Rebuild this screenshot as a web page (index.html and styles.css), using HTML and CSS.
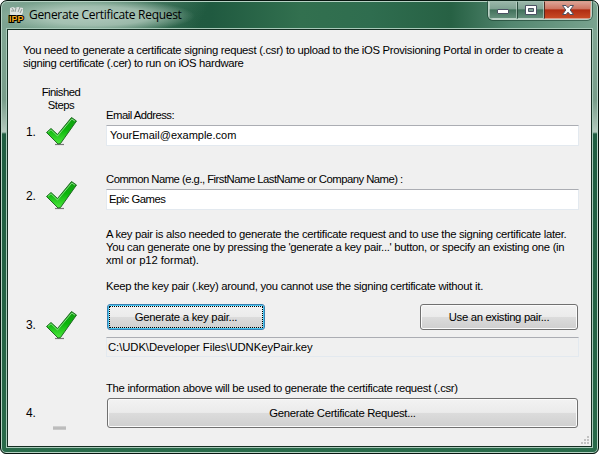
FILE: index.html
```html
<!DOCTYPE html>
<html lang="en">
<head>
<meta charset="utf-8">
<title>Generate Certificate Request</title>
<link rel="stylesheet" href="styles.css">
</head>
<body>
<svg width="0" height="0" class="defs">
  <defs>
    <linearGradient id="green" x1="0" y1="0" x2="0" y2="1">
      <stop offset="0" stop-color="#149c14"/><stop offset=".45" stop-color="#0bb50b"/><stop offset="1" stop-color="#4be83c"/>
    </linearGradient>
    <symbol id="check" viewBox="0 0 34 30">
      <path d="M10 28.5h9" stroke="#777" stroke-width="1.200"/>
      <path d="M1.500 16.500 L6 12.500 L12.500 18.500 L26.500 1.500 L31.500 5 L15.500 27.500 L13 28 Z" fill="url(#green)" stroke="#236b25" stroke-width="1" stroke-linejoin="round"/>
      <path d="M3 16.300 L6 13.800 L12.500 20 L26.800 3 L30 5.200" fill="none" stroke="#8fe08c" stroke-width=".9"/>
    </symbol>
  </defs>
</svg>
<div class="window">
  <header class="titlebar">
    <svg class="app-icon" width="17" height="17" viewBox="0 0 17 17">
      <path d="M2 1l3-1 2 1 3-1 5 1v4l-2 5H3L2 7z" fill="#dce2df"/>
      <path d="M4 1l2 3M8 1l-1 4M12 0l-2 5M14 2l-2 4M3 4h3" stroke="#8d9893" fill="none"/>
      <text class="icon-text" x="1" y="14.500" textLength="14.500">IPP</text>
    </svg>
    <h1 class="title">Generate Certificate Request</h1>
    <div class="controls">
      <span class="control minimize"><svg width="14" height="12" viewBox="0 0 14 12"><rect x="1.500" y="5.500" width="11" height="4" rx=".5" fill="#fff" stroke="#4b5263"/></svg></span>
      <span class="control maximize"><svg width="14" height="12" viewBox="0 0 14 12"><path d="M1.500 1.500h11v9h-11z" fill="#fff" stroke="#4b5263"/><path d="M4.500 4.500h5v3h-5z" fill="#7fa292" stroke="#4b5263"/></svg></span>
      <span class="control close"><svg width="14" height="12" viewBox="0 0 14 12"><path d="M1.500 1.500h3.500l2 2.300 2-2.300h3.500l-3.300 4.500 3.300 4.500h-3.500l-2-2.300-2 2.300h-3.500l3.300-4.500z" fill="#fff" stroke="#4b5263"/></svg></span>
    </div>
  </header>
  <main class="client">
    <p class="intro"><span class="line t30">You need to generate a certificate signing request (.csr) to upload to the iOS Provisioning Portal in order to create a</span><span class="line t33">signing certificate (.cer) to run on iOS hardware</span></p>
    <p class="steps-heading t53">Finished<br>Steps</p>
    <section class="step email">
      <span class="number">1.</span><svg class="check"><use href="#check"/></svg>
      <div class="body"><label class="label t53">Email Address:</label><div class="field address">YourEmail@example.com</div></div>
    </section>
    <section class="step name">
      <span class="number">2.</span><svg class="check"><use href="#check"/></svg>
      <div class="body"><label class="label t53">Common Name (e.g., FirstName LastName or Company Name) :</label><div class="field t53">Epic Games</div></div>
    </section>
    <div class="notes">
      <p><span class="line t29">A key pair is also needed to generate the certificate request and to use the signing certificate later.</span><span class="line t29">You can generate one by pressing the 'generate a key pair...' button, or specify an existing one (in</span><span class="line t10">xml or p12 format).</span></p>
      <p class="line t29">Keep the key pair (.key) around, you cannot use the signing certificate without it.</p>
    </div>
    <section class="step keys">
      <span class="number">3.</span><svg class="check"><use href="#check"/></svg>
      <div class="body">
        <div class="pair"><button class="button focused t25">Generate a key pair...</button><button class="button t33">Use an existing pair...</button></div>
        <div class="field readonly">C:\UDK\Developer Files\UDNKeyPair.key</div>
      </div>
    </section>
    <section class="step request">
      <span class="number">4.</span><span class="pending"></span>
      <div class="body"><label class="label t30">The information above will be used to generate the certificate request (.csr)</label><button class="button large t30">Generate Certificate Request...</button></div>
    </section>
    <svg class="grip" width="8" height="8" viewBox="0 0 8 8"><path d="M6 0h2v2h-2zM3 3h2v2h-2zM6 3h2v2h-2zM0 6h2v2h-2zM3 6h2v2h-2zM6 6h2v2h-2z" fill="#c2c2c2"/></svg>
  </main>
</div>
</body>
</html>
```
FILE: styles.css
```css
* { box-sizing: border-box; }
body { margin: 0; width: 599px; height: 454px; overflow: hidden; background: #fff; font: 11.3px/13px "Liberation Sans", Arial, sans-serif; color: #000; }
p, h1 { margin: 0; }
.defs { position: absolute; }
.window {
  width: 599px; height: 454px; padding: 0 6px 6px; display: flex; flex-direction: column;
  border: 1px solid #07150f; border-radius: 7px 7px 6px 6px;
  box-shadow: inset 0 0 0 1px #b6d2c4;
  background:
    radial-gradient(ellipse 98px 17px at 96px 15px, rgba(190, 211, 200, .85) 0, rgba(180, 204, 191, .75) 55%, rgba(170, 195, 182, 0) 100%) 0 0 / 100% 29px no-repeat,
    linear-gradient(115deg, #7fa493 0, #74a08a 65px, transparent 190px) 0 0 / 100% 29px no-repeat,
    linear-gradient(90deg, #276046 0, #205a40 210px, #32704f 300px, #2f6d4f 370px, #276144 450px, #538770 510px, #7aa490 598px) 0 0 / 100% 29px no-repeat,
    linear-gradient(180deg, #80a693 0, #789d8a 70px, #b4c9be 102px, #1f5d41 104px, #256345 300px, #2a6c4b 100%) 0 29px / 100% 100% no-repeat;
}
.titlebar { height: 28px; display: flex; align-items: flex-start; flex: none; }
.app-icon { margin: 6px 0 0 1px; flex: none; }
.icon-text { font: bold 9px "Liberation Sans", sans-serif; fill: #f7ac1b; stroke: #000; stroke-width: 2px; paint-order: stroke; }
.title {
  margin: 5px 0 0 -2px; padding: 0 6px; font: 12px/18px "Open Sans", sans-serif; letter-spacing: -.3px; color: #000; white-space: nowrap;
}
.controls { display: flex; margin-left: auto; height: 19px; border: 1px solid #bdd2c7; border-top: 0; border-radius: 0 0 5px 5px; overflow: hidden; box-shadow: 0 0 0 1px rgba(20, 55, 40, .55); }
.control { display: flex; justify-content: center; align-items: center; height: 18px; border: 1px solid rgba(215, 231, 223, .55); border-radius: 1px; background: linear-gradient(#98b5a8 0, #7fa292 45%, #41705a 48%, #648f7b 100%); }
.minimize { width: 28px; }
.maximize { width: 27px; border-left-color: #294c3d; }
.close { width: 47px; border-color: #d99c8b; border-left-color: #52291f; background: linear-gradient(#dba294 0, #cd735f 45%, #af2c12 48%, #c84a25 100%); }
.client { flex: 1; position: relative; background: #f0f0f0; border: 1px solid #142e22; box-shadow: 0 0 0 1px #a8c9b9; padding: 14px 11px 0 15px; }
.line { display: block; white-space: nowrap; }
.t10 { letter-spacing: -.1px; }
.t25 { letter-spacing: -.25px; }
.t29 { letter-spacing: -.285px; }
.t30 { letter-spacing: -.3px; }
.t33 { letter-spacing: -.33px; }
.t53 { letter-spacing: -.52px; }
.steps-heading { width: 76px; margin-top: 16px; text-align: center; }
.step { display: flex; padding-left: 3px; }
.number { width: 19px; flex: none; letter-spacing: -.2px; font-size: 12px; }
.check { width: 34px; height: 30px; flex: none; }
.body { margin-left: 27px; width: 473px; flex: none; }
.label { display: block; white-space: nowrap; }
.field { height: 20px; padding: 3px 2px 0; border: 1px solid #e3e9ef; border-top-color: #abadb3; background: #fff; white-space: nowrap; }
.email { margin-top: -3px; }
.email .number, .name .number { margin-top: 17px; }
.email .check, .name .check { margin-top: 7px; }
.label + .field { margin-top: 3px; height: 21px; }
.address { font-size: 11px; padding-left: 3px; letter-spacing: 0; }
.name { margin-top: 27px; }
.notes { margin: 18px 0 0 83px; }
.notes p + p { margin-top: 13px; }
.keys { margin-top: 11px; }
.keys .number { margin-top: 15px; }
.keys .check { margin-top: 6px; }
.pair { display: flex; justify-content: space-between; padding: 0 1px; }
.button { width: 158px; height: 26px; padding: 0; font-family: inherit; font-size: 11.3px; line-height: 13px; color: #000; border: 1px solid #707070; border-radius: 3px; box-shadow: inset 0 0 0 1px #fbfbfb; background: linear-gradient(#f2f2f2 0, #ebebeb 48%, #dcdcdc 50%, #cfcfcf 100%); }
.focused { border-color: #3c7fb1; box-shadow: inset 0 0 0 1px #48c8f2; outline: 1px dotted #000; outline-offset: -3px; }
.readonly { margin-top: 7px; background: transparent; letter-spacing: -.07px; padding-left: 1px; }
.request { margin-top: 25px; }
.request .number { margin-top: 25px; }
.pending { width: 34px; height: 4px; margin-top: 44px; flex: none; background: linear-gradient(#d8d8d8, #b4b4b4, #d0d0d0) 8px 0 / 13px 4px no-repeat; }
.large { display: block; width: 471px; height: 30px; margin: 3px 1px 0; }
.grip { position: absolute; right: 2px; bottom: 2px; }
```
